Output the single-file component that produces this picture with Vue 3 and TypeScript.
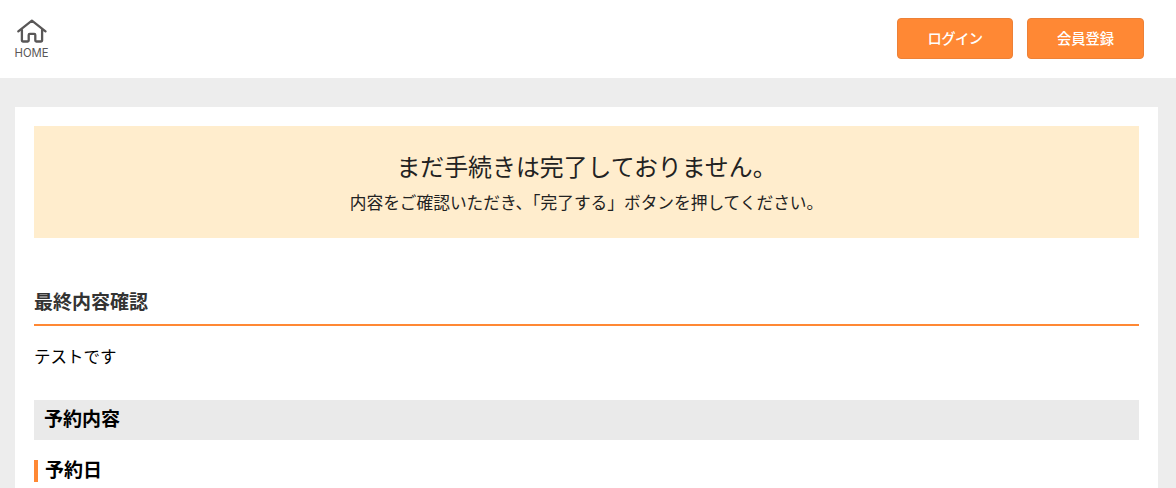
<template>
  <div class="page">
    <header class="header">
      <a class="home" href="#">
        <svg class="home-icon" viewBox="0 0 30 24" fill="none" stroke="#595757" stroke-width="2.3" stroke-linecap="round" stroke-linejoin="round">
          <path d="M1.3 12.3 14.9 1.700l13.600 10.600M4.900 10.500v11q0 1 1 1h4.800q1 0 1-1v-5.600q0-1 1-1h4.600q1 0 1 1v5.600q0 1 1 1h4.800q1 0 1-1v-11" />
        </svg>
        <span class="home-label">HOME</span>
      </a>
      <nav class="nav">
        <button class="login" type="button">ログイン</button>
        <button class="signup" type="button">会員登録</button>
      </nav>
    </header>

    <main class="panel">
      <div class="notice">
        <p class="notice-title">まだ手続きは完了しておりません。</p>
        <p class="notice-text">内容をご確認いただき、「完了する」ボタンを押してください。</p>
      </div>
      <h1 class="heading">最終内容確認</h1>
      <p class="lead">テストです</p>
      <h2 class="section-title">予約内容</h2>
      <h3 class="item-title">予約日</h3>
    </main>
  </div>
</template>

<script setup lang="ts">
</script>

<style>
body {
  background: #ededed;
  overflow: hidden;
}
</style>

<style scoped>
.page {
  height: 488px;
  overflow: hidden;
  color: #000;
  font-family: "Noto Sans CJK JP", sans-serif;
}

.header {
  display: flex;
  align-items: flex-start;
  justify-content: space-between;
  height: 78px;
  padding: 18px 32px 0 14px;
  box-sizing: border-box;
  background: #fff;
}

.home {
  display: flex;
  flex-direction: column;
  align-items: center;
  width: 35px;
  color: #595757;
  text-decoration: none;
}

.home-icon {
  width: 30px;
  height: 24px;
  margin-top: 1px;
}

.home-label {
  margin-top: 3px;
  font-family: Inter, sans-serif;
  font-size: 11.3px;
  line-height: 14px;
}

.nav {
  display: flex;
  gap: 14px;
}

.nav button {
  height: 41px;
  padding: 0 0 2px;
  border: 1px solid #ed8137;
  border-radius: 4px;
  background: #ff8834;
  color: #fff;
  font-family: inherit;
  font-size: 14.3px;
  font-weight: 500;
}

.nav .login {
  width: 116px;
  letter-spacing: -0.5px;
}

.nav .signup {
  width: 117px;
}

.panel {
  height: 400px;
  margin: 29px 18px 0 15px;
  padding: 19px 19px 0;
  box-sizing: border-box;
  background: #fff;
}

.notice {
  height: 112px;
  padding-top: 22px;
  box-sizing: border-box;
  background: #ffedcd;
  color: #222;
  text-align: center;
}

.notice-title {
  margin: 0;
  font-size: 23.9px;
  line-height: 36px;
}

.notice-text {
  margin: 6px 0 0;
  font-size: 16.7px;
  line-height: 25px;
}

.heading {
  margin: 48px 0 0;
  padding-bottom: 9px;
  border-bottom: 2px solid #ff8834;
  color: #333;
  font-size: 19px;
  line-height: 29px;
}

.lead {
  margin: 18px 0 0;
  font-size: 16.5px;
  line-height: 25px;
}

.section-title {
  height: 40px;
  margin: 31px 0 0;
  padding-left: 10px;
  background: #eaeaea;
  font-size: 19px;
  line-height: 36px;
}

.item-title {
  height: 22px;
  margin: 20px 0 0;
  padding-left: 7px;
  border-left: 4px solid #ff8834;
  font-size: 19px;
  line-height: 18px;
}
</style>
